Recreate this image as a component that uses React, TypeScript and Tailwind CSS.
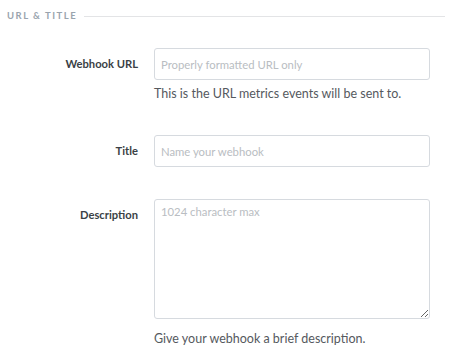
export default function App() {
  return (
    <div className="w-[457px] h-[353px] bg-white overflow-hidden" style={{ fontFamily: "Lato, 'Open Sans', sans-serif" }}>
      <div className="flex items-center pl-[7px] pr-[12px] pt-[10px]">
        <span className="text-[9.5px] font-bold tracking-[1.5px] text-[#9aa4ae] leading-[12px]">URL &amp; TITLE</span>
        <div className="flex-1 h-px bg-[#e3e4e6] ml-[7px]" />
      </div>

      <div className="flex mt-[26px]">
        <div className="w-[138px] shrink-0 text-right text-[11.2px] font-bold text-[#3a3f45] leading-[32px]">Webhook URL</div>
        <div className="ml-[16px] w-[276px]">
          <input
            className="block w-full h-[32px] border border-[#d6dadf] rounded-[3px] px-[6px] text-[11.3px] text-[#333] placeholder:text-[#b9bdc2] outline-none"
            placeholder="Properly formatted URL only"
          />
          <div className="mt-[5px] text-[12.5px] text-[#55595e] leading-[17px]">This is the URL metrics events will be sent to.</div>
        </div>
      </div>

      <div className="flex mt-[33px]">
        <div className="w-[138px] shrink-0 text-right text-[11.2px] font-bold text-[#3a3f45] leading-[32px]">Title</div>
        <div className="ml-[16px] w-[276px]">
          <input
            className="block w-full h-[32px] border border-[#d6dadf] rounded-[3px] px-[6px] text-[11.3px] text-[#333] placeholder:text-[#b9bdc2] outline-none"
            placeholder="Name your webhook"
          />
        </div>
      </div>

      <div className="flex mt-[32px]">
        <div className="w-[138px] shrink-0 text-right text-[11.2px] font-bold text-[#3a3f45] leading-[17px] pt-[7px]">Description</div>
        <div className="ml-[16px] w-[276px]">
          <textarea
            className="block w-full h-[120px] border border-[#d6dadf] rounded-[3px] px-[6px] pt-[3px] text-[11.3px] leading-[17px] text-[#333] placeholder:text-[#b9bdc2] outline-none"
            placeholder="1024 character max"
          />
          <div className="mt-[11px] text-[12.5px] text-[#55595e] leading-[17px]">Give your webhook a brief description.</div>
        </div>
      </div>
    </div>
  );
}
